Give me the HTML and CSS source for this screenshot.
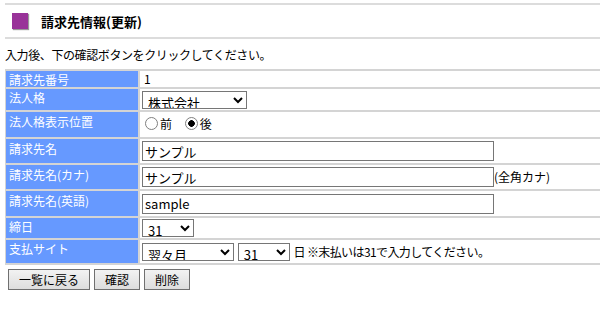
FILE: index.html
```html
<!DOCTYPE html>
<html lang="ja">
  <head>
    <meta charset="UTF-8" />
    <title>請求先情報(更新)</title>
    <link rel="stylesheet" href="styles.css">
  </head>
  <body>
  <div class="title">
    <span class="mark"></span>
    <h1>請求先情報(更新)</h1>
  </div>
  <p class="lead">入力後、下の確認ボタンをクリックしてください。</p>
  <table class="form">
    <tr class="h18">
      <th>請求先番号</th>
      <td>1</td>
    </tr>
    <tr class="h24">
      <th>法人格</th>
      <td>
        <select class="sel-corp">
          <option>株式会社</option>
        </select>
      </td>
    </tr>
    <tr class="h27">
      <th>法人格表示位置</th>
      <td>
        <label class="radio"><input type="radio" name="pos">前</label>
        <label class="radio"><input type="radio" name="pos" checked>後</label>
      </td>
    </tr>
    <tr class="h26">
      <th>請求先名</th>
      <td><input type="text" class="txt" value="サンプル"></td>
    </tr>
    <tr class="h26">
      <th>請求先名(カナ)</th>
      <td><input type="text" class="txt" value="サンプル"><span class="note">(全角カナ)</span></td>
    </tr>
    <tr class="h27">
      <th>請求先名(英語)</th>
      <td><input type="text" class="txt" value="sample"></td>
    </tr>
    <tr class="h23">
      <th>締日</th>
      <td>
        <select class="sel-day">
          <option>31</option>
        </select>
      </td>
    </tr>
    <tr class="h25">
      <th>支払サイト</th>
      <td>
        <select class="sel-month">
          <option>翌々月</option>
        </select>
        <select class="sel-day">
          <option>31</option>
        </select>
        <span class="unit">日 ※末払いは31で入力してください。</span>
      </td>
    </tr>
  </table>
  <div class="buttons">
    <button class="btn">一覧に戻る</button>
    <button class="btn">確認</button>
    <button class="btn">削除</button>
  </div>
  </body>
</html>
```

FILE: styles.css
```css
body {
  margin: 3px 0 0 5px;
  font-family: "Noto Sans CJK JP", "Liberation Sans", sans-serif;
  font-size: 12px;
  color: #000;
  background: #fff;
}
.title {
  display: flex;
  align-items: center;
  height: 32px;
  border-top: 2px solid #dcdcdc;
  border-bottom: 2px solid #dcdcdc;
  padding-left: 7px;
}
.mark {
  width: 16px;
  height: 16px;
  background: #993399;
  box-shadow: 1px 1px 1px #999;
}
.title h1 {
  margin: 0 0 0 13px;
  font-size: 13px;
  font-weight: bold;
}
.lead {
  margin: 0;
  height: 29px;
  line-height: 30px;
  padding-top: 1px;
  letter-spacing: -0.4px;
}
.form {
  width: 596px;
  border-collapse: collapse;
  border-top: 2px solid #d4d4d4;
}
.form th, .form td {
  border-bottom: 2px solid #d4d4d4;
  padding: 0;
  text-align: left;
  font-weight: normal;
}
.form th {
  width: 129px;
  background: #6699ff;
  color: #fff;
  border-left: 1px solid #d4d4d4;
  border-right: 2px solid #d4d4d4;
  padding: 2px 0 0 3px;
  line-height: 14px;
  vertical-align: top;
}
.form td {
  padding-left: 2px;
  line-height: 14px;
  vertical-align: middle;
}
.h18 { height: 17px; }
.h24 { height: 23px; }
.h27 { height: 27px; }
.h26 { height: 26px; }
.h23 { height: 22px; }
.h25 { height: 25px; }
.h18 td { padding-left: 4px; }
.h27 th, .h26 th { padding-top: 3px; }
select, input.txt {
  font-family: "Noto Sans CJK JP", "Liberation Sans", sans-serif;
  font-size: 13px;
  border: 1px solid #767676;
  background: #fff;
  margin: 0;
  box-sizing: border-box;
  vertical-align: middle;
}
select {
  height: 18px;
  padding: 0 0 0 1px;
}
.sel-corp { width: 105px; }
.sel-day { width: 52px; }
.sel-month { width: 92px; margin-right: 1px; }
input.txt {
  width: 352px;
  height: 20px;
  padding: 0 2px;
}
.note {
  vertical-align: middle;
}
.unit {
  vertical-align: middle;
  margin-left: 1px;
  letter-spacing: -0.6px;
}
.radio {
  display: inline-flex;
  align-items: center;
  margin-right: 7px;
}
.radio input {
  appearance: none;
  margin: 0 2px 0 3px;
  width: 13px;
  height: 13px;
  border: 1px solid #808080;
  border-radius: 50%;
  background: #fff;
}
.radio input:checked {
  background: radial-gradient(circle, #000 0 3px, #fff 3.6px);
}
.buttons {
  display: flex;
  gap: 4px;
  padding: 4px 0 0 3px;
}
.btn {
  font-family: "Noto Sans CJK JP", "Liberation Sans", sans-serif;
  font-size: 12px;
  height: 21px;
  padding: 0 10px;
  border: 1px solid #707070;
  background: linear-gradient(#f2f2f2, #dddddd);
  line-height: 18px;
}
```
